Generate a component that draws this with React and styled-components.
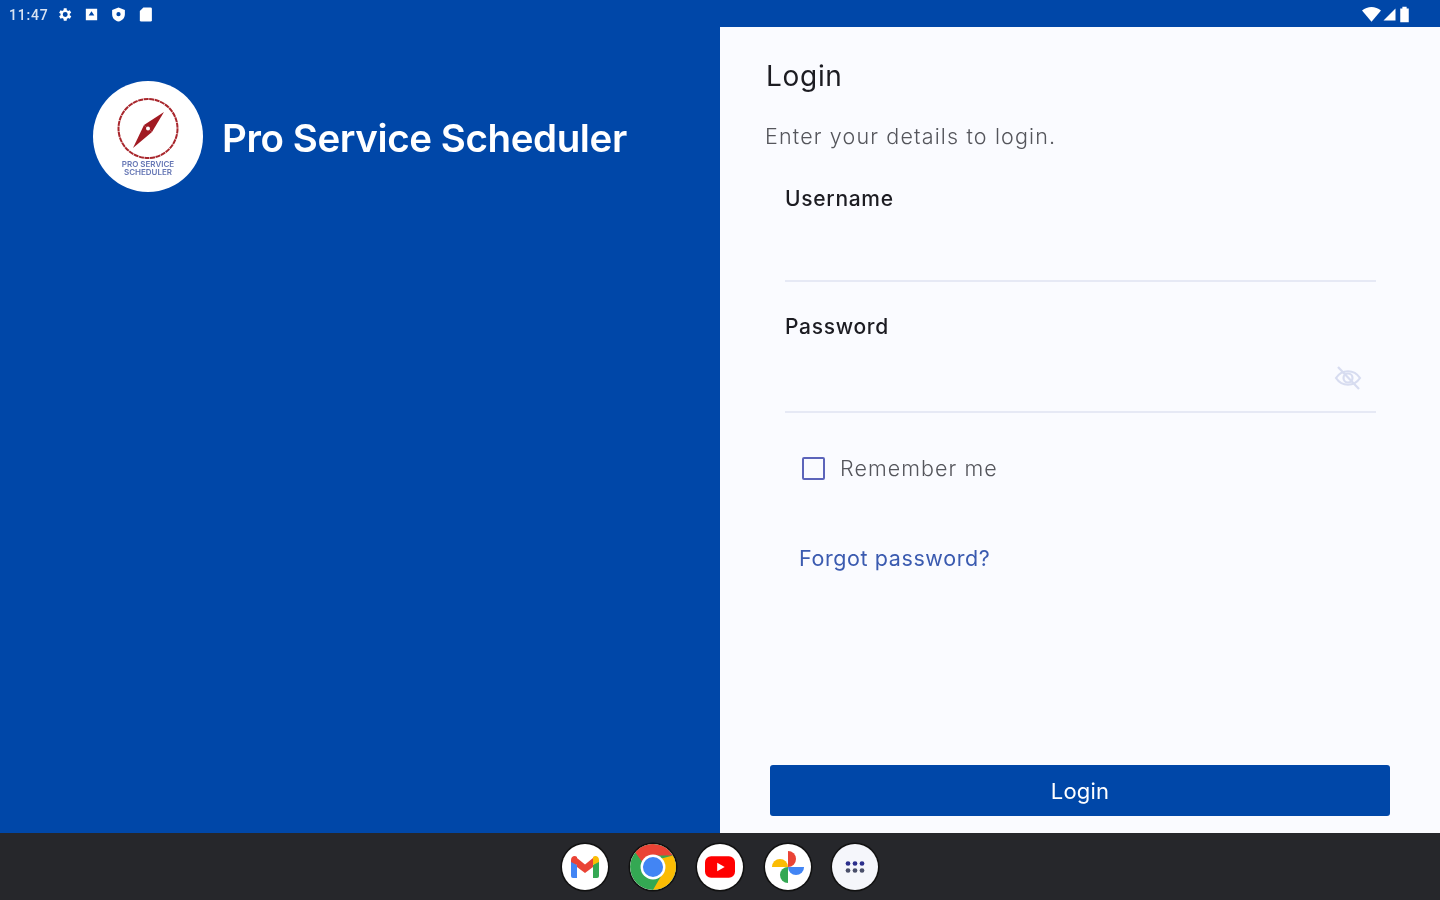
import React from "react";
import styled, { createGlobalStyle } from "styled-components";

const Global = createGlobalStyle`
  html, body { margin: 0; padding: 0; height: 100%; }
  body { background: #26272b; font-family: "Inter", "Noto Sans", sans-serif; }
  * { box-sizing: border-box; }
`;

const Screen = styled.div`
  width: 1440px; height: 900px; display: flex; flex-direction: column; overflow: hidden;
  background: #0047a8; filter: blur(0.7px);
`;
const StatusBar = styled.div`
  height: 27px; flex: none; display: flex; align-items: center; justify-content: space-between;
  padding: 2px 29px 0 9px; color: #fff;
`;
const StatusGroup = styled.div`display: flex; align-items: center; gap: ${p => p.$gap || 0}px;`;
const Clock = styled.span`
  font: 500 14px "Roboto", sans-serif; width: 47px; letter-spacing: 0.8px; opacity: .85;
`;
const StatusIcon = styled.svg`display: block; width: ${p => p.$w || 17}px; height: 17px; fill: #fff;`;
const Body = styled.div`flex: 1; display: flex; min-height: 0;`;
const Brand = styled.section`
  width: 720px; flex: none; background: #0047a8; padding: 54px 0 0 93px;
  display: flex; align-items: flex-start; gap: 19px;
`;
const LogoCircle = styled.div`
  width: 110px; height: 111px; border-radius: 50%; background: #fff; flex: none;
  display: flex; align-items: center; justify-content: center;
`;
const BrandName = styled.h1`
  margin: 34px 0 0; color: #fff; font: 600 38.5px/1.2 "Inter", sans-serif; letter-spacing: -0.4px; white-space: nowrap;
`;
const Panel = styled.section`
  flex: 1; background: #fafbff; padding: 32px 50px 17px 46px; display: flex; flex-direction: column;
`;
const Title = styled.h2`
  margin: 0; font: 400 28px/34px "Inter", sans-serif; color: #1c1c22; letter-spacing: 0.7px;
`;
const Subtitle = styled.p`
  margin: 28px 0 0 -1px; font: 300 21.5px/30px "Inter", sans-serif; color: #55565c; letter-spacing: 1.15px;
`;
const Field = styled.div`
  margin: ${p => p.$top}px 0 0 19px; width: 591px; height: ${p => p.$h}px; border-bottom: 2px solid #e6e9f5;
  position: relative;
`;
const FieldLabel = styled.label`
  display: block; font: 500 21px/28px "Inter", sans-serif; color: #1c1c22; letter-spacing: 0.7px;
`;
const EyeButton = styled.span`
  position: absolute; right: 13px; bottom: 18px; display: flex;
`;
const CheckRow = styled.div`
  margin: 40px 0 0 36px; display: flex; align-items: center; gap: 15px;
`;
const CheckBox = styled.span`
  width: 23px; height: 23px; border: 2.5px solid #5c64ba; border-radius: 2px; display: block;
`;
const CheckText = styled.span`
  font: 300 21.5px/30px "Inter", sans-serif; color: #55565c; letter-spacing: 1.05px;
`;
const Forgot = styled.a`
  margin: 60px 0 0 33px; font: 400 21.5px/30px "Inter", sans-serif; color: #3b5bb0; letter-spacing: 0.6px;
`;
const Spacer = styled.div`flex: 1;`;
const LoginButton = styled.button`
  margin-left: 4px; width: 620px; height: 51px; border: 0; border-radius: 3px; background: #0047a8;
  color: #fff; font: 400 22px "Inter", sans-serif; letter-spacing: 0.2px;
`;
const Dock = styled.nav`
  height: 67px; flex: none; background: #26272b; display: flex; align-items: center; justify-content: center;
  gap: 21.5px;
`;
const DockIcon = styled.div`
  width: 46px; height: 46px; border-radius: 50%; background: ${p => p.$bg || "#fff"};
  box-shadow: 0 0 0 1.5px #111; display: flex; align-items: center; justify-content: center; overflow: hidden;
`;
const LogoText = styled.text`
  font: 600 8px "Inter", sans-serif; fill: #6576b4; text-anchor: middle;
`;

const Logo = () => (
  <svg width="72" height="90" viewBox="0 0 72 90">
    <circle cx="36" cy="36.500" r="29.500" fill="none" stroke="#a8262c" strokeWidth="2" strokeDasharray="5 0.600" />
    <path d="M52 20 L40 40 L32 33 Z" fill="#a11a22" />
    <path d="M21 56 L32 33 L40 40 Z" fill="#a11a22" />
    <circle cx="36" cy="36.500" r="2" fill="#fff" />
    <LogoText x="36" y="75">PRO SERVICE</LogoText>
    <LogoText x="36" y="83">SCHEDULER</LogoText>
  </svg>
);

const Gmail = () => (
  <svg width="32" height="24" viewBox="0 0 30 24">
    <path d="M1 23V5l6 5v13H3a2 2 0 0 1-2-2z" fill="#4285f4" />
    <path d="M29 23V5l-6 5v13h4a2 2 0 0 0 2-2z" fill="#34a853" />
    <path d="M7 12V3l8 6.500L23 3v9l-8 6z" fill="#ea4335" />
    <path d="M1 7V5c0-4 4-5 6-3v8z" fill="#ea4335" />
    <path d="M29 7V5c0-4-4-5-6-3v8z" fill="#fbbc04" />
  </svg>
);
const Chrome = () => (
  <svg width="46" height="46" viewBox="0 0 48 48">
    <circle cx="24" cy="24" r="24" fill="#34a853" />
    <path d="M24 0a24 24 0 0 1 20.800 12H24a12 12 0 0 0-11 7L5 8A24 24 0 0 1 24 0z" fill="#ea4335" />
    <path d="M44.800 12A24 24 0 0 1 24 48l10.400-18A12 12 0 0 0 33 15z" fill="#fbbc04" />
    <circle cx="24" cy="24" r="13" fill="#fff" />
    <circle cx="24" cy="24" r="10.500" fill="#4285f4" />
  </svg>
);
const YouTube = () => (
  <svg width="30" height="22" viewBox="0 0 32 23">
    <rect width="32" height="23" rx="6.500" fill="#f00" />
    <path d="M13 7l8 4.500-8 4.500z" fill="#fff" />
  </svg>
);
const Photos = () => (
  <svg width="34" height="34" viewBox="0 0 36 36">
    <path d="M18 18V1a8.500 8.500 0 0 1 0 17z" fill="#ea4335" />
    <path d="M18 18h17a8.500 8.500 0 0 1-17 0z" fill="#4285f4" />
    <path d="M18 18v17a8.500 8.500 0 0 1 0-17z" fill="#34a853" />
    <path d="M18 18H1a8.500 8.500 0 0 1 17 0z" fill="#fbbc04" />
  </svg>
);
const Apps = () => (
  <svg width="22" height="14" viewBox="0 0 24 16">
    {[0, 1].map(r => [0, 1, 2].map(c => (
      <circle key={`${r}${c}`} cx={4 + c * 8} cy={4 + r * 8} r="2.700" fill={r ? "#4a4f6a" : "#2c2f8c"} />
    )))}
  </svg>
);

export default function App() {
  return (
    <Screen>
      <Global />
      <StatusBar>
        <StatusGroup>
          <Clock>11:47</Clock>
          <StatusGroup $gap={10}>
            <StatusIcon viewBox="0 0 24 24"><path fillRule="evenodd" d="M19.400 13a7.500 7.500 0 0 0 0-2l2.100-1.600-2-3.500-2.500 1a7.600 7.600 0 0 0-1.700-1L15 3.300h-4l-.4 2.600a7.600 7.600 0 0 0-1.700 1l-2.500-1-2 3.500L6.500 11a7.500 7.500 0 0 0 0 2l-2.100 1.600 2 3.500 2.500-1c.5.4 1.100.7 1.700 1l.4 2.600h4l.4-2.600c.6-.3 1.200-.6 1.700-1l2.500 1 2-3.500zM13 15.500a3.500 3.500 0 1 1 0-7 3.500 3.500 0 0 1 0 7z" /></StatusIcon>
            <StatusIcon viewBox="0 0 24 24"><path fillRule="evenodd" d="M4 4h16v16H4zm8 3.500-4 6h8z" /></StatusIcon>
            <StatusIcon viewBox="0 0 24 24"><path fillRule="evenodd" d="M12 2l9 3.500v6c0 5-3.600 9-9 10.500-5.400-1.500-9-5.500-9-10.500v-6zm0 6.500a3 3 0 1 0 0 6 3 3 0 0 0 0-6z" /></StatusIcon>
            <StatusIcon viewBox="0 0 24 24"><path d="M9 2h10a2 2 0 0 1 2 2v16a2 2 0 0 1-2 2H6a2 2 0 0 1-2-2V7z" /></StatusIcon>
          </StatusGroup>
        </StatusGroup>
        <StatusGroup $gap={1}>
          <StatusIcon $w={19} viewBox="0 0 24 20"><path d="M12 19L0 5c7-6 17-6 24 0z" /></StatusIcon>
          <StatusIcon $w={15} viewBox="0 0 20 20"><path d="M18 2v16H2z" /></StatusIcon>
          <StatusIcon $w={13} viewBox="0 0 14 20"><path d="M4.500 1h5v2H12v16H2V3h2.500z" /></StatusIcon>
        </StatusGroup>
      </StatusBar>
      <Body>
        <Brand>
          <LogoCircle><Logo /></LogoCircle>
          <BrandName>Pro Service Scheduler</BrandName>
        </Brand>
        <Panel>
          <Title>Login</Title>
          <Subtitle>Enter your details to login.</Subtitle>
          <Field $top={34} $h={97}><FieldLabel>Username</FieldLabel></Field>
          <Field $top={31} $h={100}>
            <FieldLabel>Password</FieldLabel>
            <EyeButton>
              <svg width="30" height="30" viewBox="0 0 30 30" fill="none" stroke="#d7dcf0" strokeWidth="2.200">
                <path d="M3 15c6-9 18-9 24 0-6 9-18 9-24 0z" />
                <circle cx="15" cy="15" r="4.500" />
                <path d="M5 4l21 22" />
              </svg>
            </EyeButton>
          </Field>
          <CheckRow><CheckBox /><CheckText>Remember me</CheckText></CheckRow>
          <Forgot>Forgot password?</Forgot>
          <Spacer />
          <LoginButton>Login</LoginButton>
        </Panel>
      </Body>
      <Dock>
        <DockIcon><Gmail /></DockIcon>
        <DockIcon><Chrome /></DockIcon>
        <DockIcon><YouTube /></DockIcon>
        <DockIcon><Photos /></DockIcon>
        <DockIcon $bg="#f5f6fb"><Apps /></DockIcon>
      </Dock>
    </Screen>
  );
}
